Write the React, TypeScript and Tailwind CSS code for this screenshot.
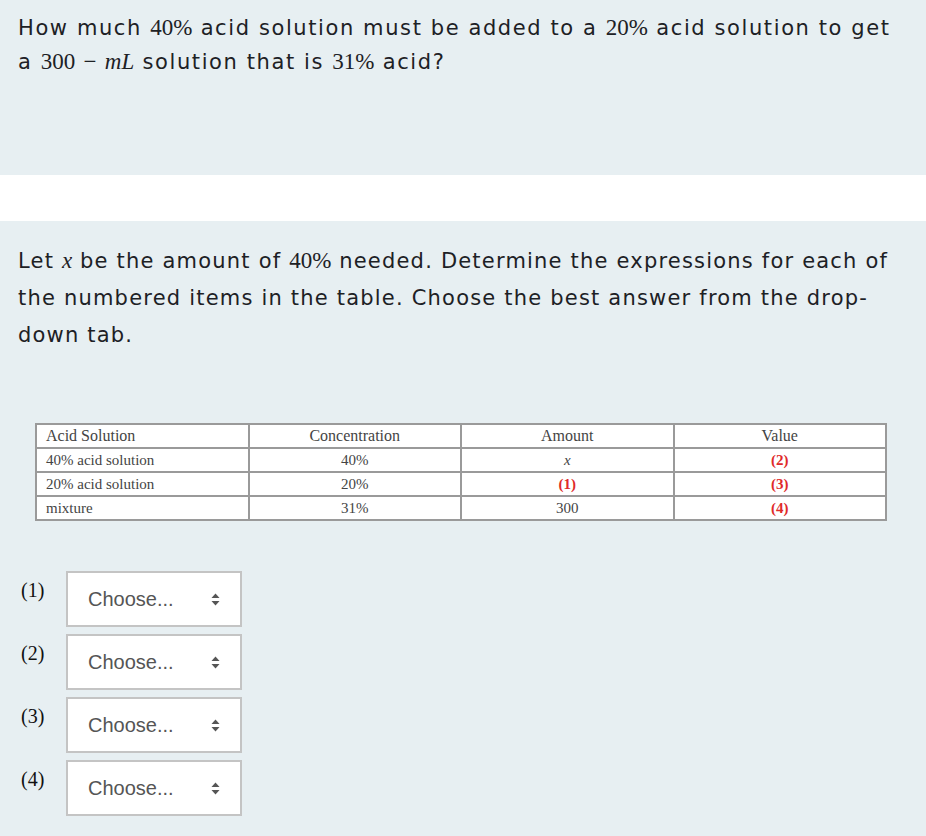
import React from 'react';

const mathFont = { fontFamily: '"Liberation Serif", "DejaVu Serif", serif' };

const M: React.FC<{ children: React.ReactNode; italic?: boolean }> = ({ children, italic }) => (
  <span className={`text-[23px] tracking-normal ${italic ? 'italic' : ''}`} style={mathFont}>
    {children}
  </span>
);

const rows = [
  { name: '40% acid solution', conc: '40%', amount: 'x', value: '(2)' },
  { name: '20% acid solution', conc: '20%', amount: '(1)', value: '(3)' },
  { name: 'mixture', conc: '31%', amount: '300', value: '(4)' },
];

const SelectArrows = () => (
  <svg width="9" height="13" viewBox="0 0 9 13" className="text-[#555]">
    <path d="M4.5 0.5 L8.5 5 L0.5 5 Z" fill="currentColor" />
    <path d="M4.5 12.5 L8.5 8 L0.5 8 Z" fill="currentColor" />
  </svg>
);

const cellText = (v: string) => {
  if (v === 'x') return <span className="italic">x</span>;
  if (v.startsWith('(')) return <span className="font-bold text-[#e02a2a]">{v}</span>;
  return v;
};

export default function App() {
  return (
    <div
      className="flex min-h-screen flex-col bg-white text-[#1d2125]"
      style={{ fontFamily: '"DejaVu Sans", "Open Sans", sans-serif' }}
    >
      {/* Question */}
      <div className="h-[175px] bg-[#e7eff2] px-[18px] pt-[11px]">
        <p className="whitespace-nowrap text-[21px] leading-[34px] tracking-[1.6px]">
          How much <M>40%</M> acid solution must be added to a <M>20%</M> acid solution to get
          <br />a <M>300</M> <M>−</M> <M italic>mL</M> solution that is <M>31%</M> acid?
        </p>
      </div>

      <div className="h-[46px] bg-white" />

      {/* Sub-question */}
      <div className="flex-1 bg-[#e7eff2] px-[18px] pt-[21px] pb-[16px]">
        <p className="whitespace-nowrap text-[21px] leading-[37px] tracking-[1.2px]">
          Let <M italic>x</M> be the amount of <M>40%</M> needed. Determine the expressions for each of
          <br />
          the numbered items in the table. Choose the best answer from the drop-
          <br />
          down tab.
        </p>

        <table
          className="mt-[69px] ml-[17px] w-[852px] table-fixed border-collapse bg-white text-[15px] text-[#444]"
          style={mathFont}
        >
          <thead>
            <tr className="h-[24px]">
              <th className="border-2 border-[#9a9a9a] pl-[9px] text-left text-[16px] font-normal leading-none">Acid Solution</th>
              <th className="border-2 border-[#9a9a9a] text-center text-[16px] font-normal leading-none">Concentration</th>
              <th className="border-2 border-[#9a9a9a] text-center text-[16px] font-normal leading-none">Amount</th>
              <th className="border-2 border-[#9a9a9a] text-center text-[16px] font-normal leading-none">Value</th>
            </tr>
          </thead>
          <tbody>
            {rows.map((r) => (
              <tr key={r.name} className="h-[24px]">
                <td className="border-2 border-[#9a9a9a] pl-[9px] leading-none">{r.name}</td>
                <td className="border-2 border-[#9a9a9a] text-center leading-none">{r.conc}</td>
                <td className="border-2 border-[#9a9a9a] text-center leading-none">{cellText(r.amount)}</td>
                <td className="border-2 border-[#9a9a9a] text-center leading-none">{cellText(r.value)}</td>
              </tr>
            ))}
          </tbody>
        </table>

        {/* Drop-downs */}
        <div className="mt-[50px] flex flex-col gap-[7px]">
          {[1, 2, 3, 4].map((n) => (
            <div key={n} className="flex items-start">
              <span className="ml-[3px] mt-[4px] w-[45px] text-[20px] text-[#111]" style={mathFont}>
                ({n})
              </span>
              <div
                className="flex h-[56px] w-[176px] items-center justify-between border-2 border-[#c4c4c4] bg-white pl-[20px] pr-[20px] text-[20px] text-[#555]"
                style={{ fontFamily: '"Liberation Sans", Arial, sans-serif' }}
              >
                <span>Choose...</span>
                <SelectArrows />
              </div>
            </div>
          ))}
        </div>
      </div>
    </div>
  );
}
